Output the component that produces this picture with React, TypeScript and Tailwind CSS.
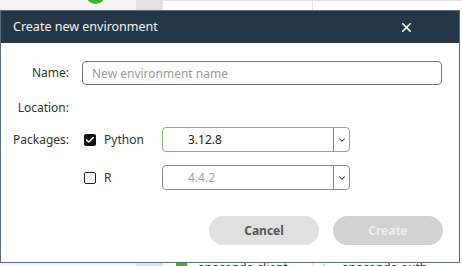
import { X, ChevronDown, Check } from "lucide-react"

const font = { fontFamily: '"Noto Sans", "Open Sans", sans-serif' }

const Checkbox = ({ checked }: { checked: boolean }) =>
    checked ? (
        <span className="flex h-[12px] w-[12px] shrink-0 items-center justify-center rounded-[2px] bg-[#111]">
            <Check size={10} strokeWidth={3.5} color="#fff" />
        </span>
    ) : (
        <span className="block h-[12px] w-[12px] shrink-0 rounded-[2px] border-[1.5px] border-[#222] bg-white" />
    )

type SelectProps = {
    value: string
    active: boolean
}
const VersionSelect = ({ value, active }: SelectProps) => (
    <div
        className={`flex h-[25px] w-[188px] items-stretch rounded-[4px] border bg-white ${
            active ? "border-[#76bd63]" : "border-[#8a8a8a]"
        }`}
    >
        <div className={`flex flex-1 items-center pl-[25px] text-[12px] ${active ? "text-[#222]" : "text-[#a5a5a5]"}`}>{value}</div>
        <div className="flex w-[16px] items-center justify-center border-l border-[#8a8a8a]">
            <ChevronDown size={10} strokeWidth={2.5} color="#333" />
        </div>
    </div>
)

const App = () => {
    return (
        <div className="relative h-[266px] w-[462px] overflow-hidden bg-white" style={font}>
            {/* app behind the dialog */}
            <div className="flex h-full">
                <div className="relative w-[136px] bg-[#f3f3f3]">
                    <span className="absolute left-[86px] top-[-15px] h-[19px] w-[19px] rounded-full bg-[#43b02a]" />
                </div>
                <div className="w-[27px] bg-[#e2e2e2]" />
                <div className="flex w-[150px] flex-col justify-end border-r border-t border-[#e4e4e4]">
                    <div className="flex h-[4px] items-start gap-[11px] overflow-visible pl-[13px]">
                        <span className="h-[11px] w-[11px] bg-[#43b02a]" />
                        <span className="text-[12px] leading-[12px] text-[#333]">anaconda-client</span>
                    </div>
                </div>
                <div className="flex flex-1 flex-col justify-end border-t border-[#e4e4e4]">
                    <div className="flex h-[4px] items-start gap-[16px] overflow-visible pl-[5px]">
                        <span className="text-[10px] leading-[10px] text-[#43b02a]">✓</span>
                        <span className="text-[12px] leading-[12px] text-[#333]">anaconda-auth-common</span>
                    </div>
                </div>
            </div>

            {/* dialog */}
            <div className="absolute left-0 top-[10px] flex h-[253px] w-[460px] flex-col border border-[#5b6e7d] bg-white">
                <div className="flex h-[32px] items-center justify-between bg-[#253746] pl-[12px] pr-[45px]">
                    <span className="text-[12.5px] text-[#f2f2f2]">Create new environment</span>
                    <X size={15} strokeWidth={2.5} color="#fff" />
                </div>

                <div className="flex flex-col pt-[18px] text-[12px] text-[#333]">
                    <div className="flex items-center">
                        <span className="w-[68px] text-right">Name:</span>
                        <input
                            type="text"
                            placeholder="New environment name"
                            className="ml-[13px] h-[24px] w-[360px] rounded-[4px] border border-[#777] px-[9px] text-[12px] outline-none placeholder:text-[#9a9a9a]"
                        />
                    </div>

                    <div className="mt-[15px] flex h-[16px] items-center">
                        <span className="w-[68px] text-right">Location:</span>
                    </div>

                    <div className="mt-[11px] flex items-center">
                        <span className="w-[68px] text-right">Packages:</span>
                        <span className="ml-[15px]">
                            <Checkbox checked />
                        </span>
                        <span className="ml-[8px] w-[58px]">Python</span>
                        <VersionSelect value="3.12.8" active />
                    </div>

                    <div className="mt-[13px] flex items-center">
                        <span className="w-[68px]" />
                        <span className="ml-[15px]">
                            <Checkbox checked={false} />
                        </span>
                        <span className="ml-[8px] w-[58px]">R</span>
                        <VersionSelect value="4.4.2" active={false} />
                    </div>

                    <div className="mt-[26px] flex justify-end gap-[14px] pr-[16px]">
                        <button className="h-[29px] w-[110px] rounded-full bg-[#e0e0e0] text-[12px] font-bold text-[#555]">Cancel</button>
                        <button disabled className="h-[29px] w-[110px] rounded-full bg-[#d2d2d2] text-[12px] font-bold text-[#eeeeee]">
                            Create
                        </button>
                    </div>
                </div>
            </div>
        </div>
    )
}

export default App
